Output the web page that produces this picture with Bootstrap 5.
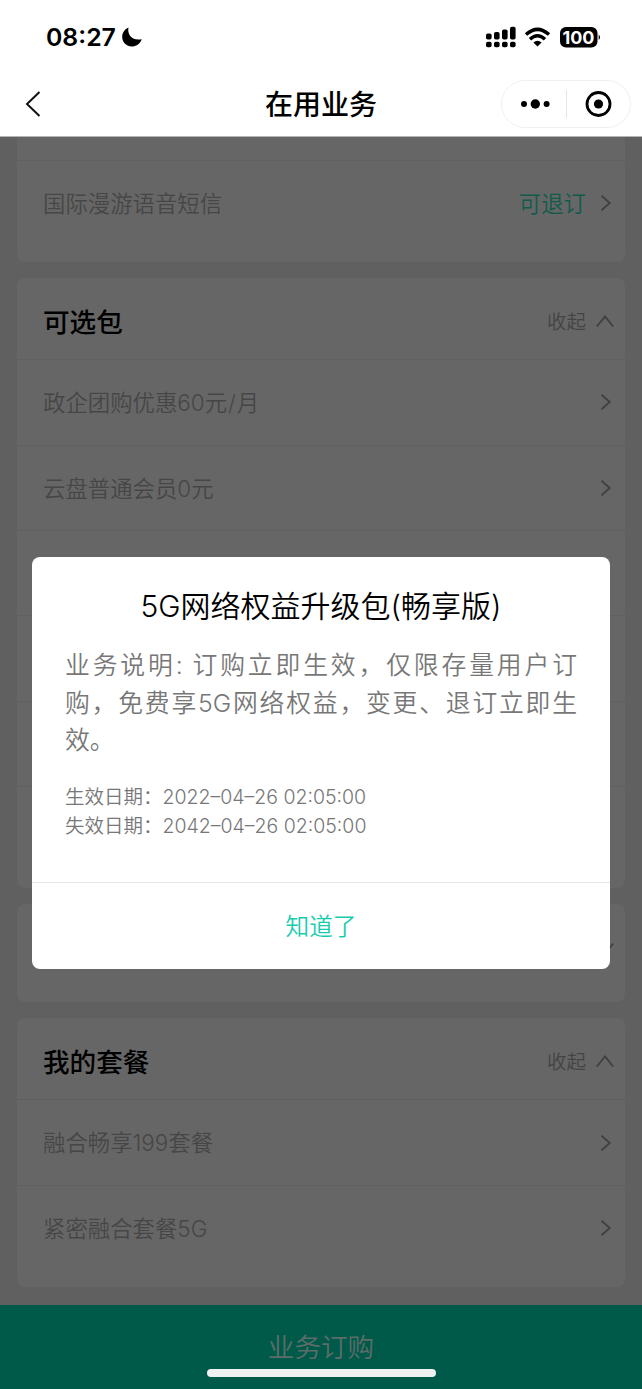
<!DOCTYPE html>
<html lang="zh-CN">
<head>
<meta charset="utf-8">
<meta name="viewport" content="width=device-width, initial-scale=1">
<title>在用业务</title>
<link href="https://cdn.jsdelivr.net/npm/bootstrap@5.3.0/dist/css/bootstrap.min.css" rel="stylesheet">
<style>
  body { font-family: Inter, "Noto Sans CJK SC", sans-serif; background: #606060; color: #000; height: 1389px; overflow: hidden; }
  svg { display: block; flex: none; }
  .status-bar { height: 72px; padding: 2px 41px 0 46px; }
  .clock { font-size: 24.8px; font-weight: 600; line-height: 1; }
  .nav-row { height: 65px; border-bottom: 1px solid #b5b5b5; display: grid; grid-template-columns: 1fr auto 1fr; padding: 0 11px; }
  .back { margin-left: 14px; }
  .page-title { font-size: 28px; font-weight: 500; line-height: 1; padding-top: 2px; }
  .capsule { width: 130px; height: 48px; border: 1px solid #f0f0f0; }
  .capsule-sep { width: 1px; height: 28px; background: #e4e4e4; }
  .content-area { height: 1168px; padding: 0 17px; gap: 16px; overflow: hidden; }
  .panel { background: #666; border-radius: 8px; padding-bottom: 16.4px; flex: none; }
  .panel-first { border-radius: 0 0 8px 8px; padding-top: 23px; }
  .panel-head { height: 81.5px; padding: 8px 10px 0 26px; }
  .panel-name { font-size: 26.6px; font-weight: 500; line-height: 1; }
  .toggle-text { font-size: 19.5px; font-weight: 350; color: #444; gap: 9px; line-height: 1; }
  .toggle-text svg { margin-bottom: 3px; }
  .entry { height: 85.4px; border-top: 1px solid #606060; padding: 0 13px 0 26px; color: #464646; font-size: 22.4px; font-weight: 350; line-height: 1; }
  .entry span { padding-top: 2px; }
  .slash { margin: 0 1px; }
  .refund { color: #115b4c; margin-right: 14px; }
  .order-bar { height: 84px; background: #005a4a; color: #5c6d69; font-size: 26.6px; font-weight: 350; line-height: 1; }
  .home-line { left: 207px; bottom: 12px; width: 229px; height: 8px; background: #eef1f0; }
  .dialog-box { left: 32px; top: 557px; width: 578px; height: 412px; background: #fff; border-radius: 8px; }
  .dialog-main { height: 325px; padding: 29px 33px 0; }
  .dialog-title { font-size: 30px; font-weight: 350; line-height: 40px; margin-bottom: 21px; }
  .desc { font-size: 24.8px; font-weight: 350; line-height: 37.5px; color: #777; margin-bottom: 23.5px; }
  .desc-line { display: block; white-space: nowrap; }
  .fill { text-align: justify; text-align-last: justify; }
  .dates { font-size: 19.5px; font-weight: 350; line-height: 28.5px; color: #777; }
  .confirm { height: 87px; border-top: 1px solid #e5e5e5; color: #17ccae; font-size: 23.7px; font-weight: 350; line-height: 1; padding-top: 1px; }
</style>
<script src="https://cdn.jsdelivr.net/npm/bootstrap@5.3.0/dist/js/bootstrap.bundle.min.js"></script>
</head>
<body class="position-relative">
<svg width="0" height="0" class="position-absolute">
  <symbol id="right" viewBox="0 0 12 18"><path d="M1.500 1.800 9.800 9 1.500 16.200" fill="none" stroke="#404040" stroke-width="1.800"/></symbol>
  <symbol id="up" viewBox="0 0 20 14"><path d="M1.800 12.500 10 2.500 18.200 12.500" fill="none" stroke="#404040" stroke-width="1.900"/></symbol>
</svg>

<header class="bg-white">
  <div class="status-bar d-flex align-items-center justify-content-between">
    <div class="d-flex align-items-center gap-1">
      <span class="clock">08:27</span>
      <svg width="22" height="22" viewBox="-1 0 22 22"><path d="M7.500 1.500C6 8 10.500 15.200 20.800 13.200C18.800 18.200 15 20.500 10.800 20.500C5.500 20.500 1.200 16.200 1.200 11C1.200 6.500 3.800 3 7.500 1.500Z"/></svg>
    </div>
    <svg width="116" height="24" viewBox="0 0 116 24">
      <g>
        <rect x="1" y="8.500" width="5.600" height="6" rx="1.800"/><rect x="9" y="7" width="5.600" height="7.500" rx="1.800"/><rect x="17" y="4.500" width="5.600" height="10" rx="1.800"/><rect x="25" y="1.800" width="5.600" height="12.700" rx="1.800"/>
        <rect x="1" y="16.800" width="5.600" height="5.400" rx="1.800"/><rect x="9" y="16.800" width="5.600" height="5.400" rx="1.800"/><rect x="17" y="16.800" width="5.600" height="5.400" rx="1.800"/><rect x="25" y="16.800" width="5.600" height="5.400" rx="1.800"/>
      </g>
      <g fill="none" stroke="#000" stroke-width="3.400"><path d="M41 9.600Q52.500-.9 64 9.600"/><path d="M45 14.200Q52.500 7.400 60 14.200"/></g>
      <path d="M48.400 17.500Q52.500 14 56.600 17.500L52.500 21.500Z"/>
      <rect x="75" y="2" width="37.500" height="20.500" rx="6"/><path d="M113.700 9.500q2.600 2.700 0 5.600Z"/>
      <text x="93.500" y="18.600" text-anchor="middle" fill="#fff" font-size="17.800" font-weight="700" textLength="32" lengthAdjust="spacingAndGlyphs">100</text>
    </svg>
  </div>
  <nav class="nav-row align-items-center">
    <svg class="back" width="16" height="26" viewBox="0 0 16 26"><path d="M14.500 1 2 13 14.500 25" fill="none" stroke="#111" stroke-width="2"/></svg>
    <div class="page-title">在用业务</div>
    <div class="capsule rounded-pill d-flex align-items-center ms-auto">
      <svg width="64" height="28" viewBox="0 0 64 28"><circle cx="22" cy="14" r="3"/><circle cx="33.300" cy="14" r="4.700"/><circle cx="44.600" cy="14" r="3"/></svg>
      <div class="capsule-sep"></div>
      <svg width="63" height="28" viewBox="0 0 63 28"><circle cx="31.500" cy="14" r="11.500" fill="none" stroke="#000" stroke-width="2.800"/><circle cx="31.500" cy="14" r="4.600"/></svg>
    </div>
  </nav>
</header>

<main class="content-area d-flex flex-column">
  <section class="panel panel-first">
    <div class="entry d-flex align-items-center"><span class="me-auto">国际漫游语音短信</span><span class="refund">可退订</span><svg width="12" height="18"><use href="#right"/></svg></div>
  </section>
  <section class="panel">
    <div class="panel-head d-flex align-items-center justify-content-between"><span class="panel-name">可选包</span><span class="toggle-text d-flex align-items-center">收起<svg width="20" height="14"><use href="#up"/></svg></span></div>
    <div class="entry d-flex align-items-center justify-content-between"><span>政企团购优惠60元<i class="slash fst-normal">/</i>月</span><svg width="12" height="18"><use href="#right"/></svg></div>
    <div class="entry d-flex align-items-center justify-content-between"><span>云盘普通会员0元</span><svg width="12" height="18"><use href="#right"/></svg></div>
    <div class="entry"></div>
    <div class="entry"></div>
    <div class="entry"></div>
    <div class="entry"></div>
  </section>
  <section class="panel">
    <div class="panel-head d-flex align-items-center justify-content-end"><svg width="20" height="14" viewBox="0 0 20 14"><path d="M1.800 1.500 10 11.500 18.200 1.500" fill="none" stroke="#404040" stroke-width="1.900"/></svg></div>
  </section>
  <section class="panel">
    <div class="panel-head d-flex align-items-center justify-content-between"><span class="panel-name">我的套餐</span><span class="toggle-text d-flex align-items-center">收起<svg width="20" height="14"><use href="#up"/></svg></span></div>
    <div class="entry d-flex align-items-center justify-content-between"><span>融合畅享199套餐</span><svg width="12" height="18"><use href="#right"/></svg></div>
    <div class="entry d-flex align-items-center justify-content-between"><span>紧密融合套餐5G</span><svg width="12" height="18"><use href="#right"/></svg></div>
  </section>
</main>

<footer class="order-bar d-flex align-items-center justify-content-center">业务订购</footer>
<div class="home-line position-absolute rounded-pill"></div>

<div class="dialog-box position-absolute" role="dialog">
  <div class="dialog-main">
    <div class="dialog-title text-center">5G网络权益升级包(畅享版)</div>
    <div class="desc"><span class="desc-line fill">业务说明: 订购立即生效，仅限存量用户订</span><span class="desc-line fill">购，免费享5G网络权益，变更、退订立即生</span><span class="desc-line">效。</span></div>
    <div class="dates"><div>生效日期：2022–04–26 02:05:00</div><div>失效日期：2042–04–26 02:05:00</div></div>
  </div>
  <div class="confirm d-flex align-items-center justify-content-center">知道了</div>
</div>
</body>
</html>
